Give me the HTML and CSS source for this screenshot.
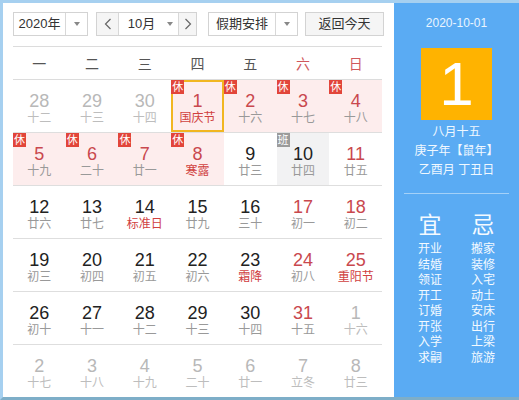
FILE: index.html
```html
<!DOCTYPE html>
<html lang="zh-CN">
<head>
<meta charset="utf-8">
<title>万年历</title>
<link rel="stylesheet" href="styles.css">
</head>
<body>
<div class="frame">
  <div class="left">
    <div class="controls">
      <div class="select year">
        <span class="sel-text">2020年</span>
        <span class="sel-arrow"><i class="tri"></i></span>
      </div>
      <div class="month-group">
        <span class="nav"><svg width="8" height="12" viewBox="0 0 8 12"><polyline points="6.5,1 1.5,6 6.5,11" fill="none" stroke="#666" stroke-width="1.2"/></svg></span>
        <span class="month"><span>10月</span><i class="tri"></i></span>
        <span class="nav next"><svg width="8" height="12" viewBox="0 0 8 12"><polyline points="1.5,1 6.5,6 1.5,11" fill="none" stroke="#666" stroke-width="1.2"/></svg></span>
      </div>
      <div class="select holiday">
        <span class="sel-text">假期安排</span>
        <span class="sel-arrow"><i class="tri"></i></span>
      </div>
      <div class="today-btn">返回今天</div>
    </div>

    <div class="weekdays">
      <span>一</span><span>二</span><span>三</span><span>四</span><span>五</span><span class="we">六</span><span class="we">日</span>
    </div>

    <div class="grid">
      <div class="row">
        <div class="cell other"><div class="num">28</div><div class="lun">十二</div></div>
        <div class="cell other"><div class="num">29</div><div class="lun">十三</div></div>
        <div class="cell other"><div class="num">30</div><div class="lun">十四</div></div>
        <div class="cell hol sel red"><span class="badge">休</span><div class="num">1</div><div class="lun fest">国庆节</div></div>
        <div class="cell hol red"><span class="badge">休</span><div class="num">2</div><div class="lun">十六</div></div>
        <div class="cell hol red"><span class="badge">休</span><div class="num">3</div><div class="lun">十七</div></div>
        <div class="cell hol red"><span class="badge">休</span><div class="num">4</div><div class="lun">十八</div></div>
      </div>
      <div class="row">
        <div class="cell hol red"><span class="badge">休</span><div class="num">5</div><div class="lun">十九</div></div>
        <div class="cell hol red"><span class="badge">休</span><div class="num">6</div><div class="lun">二十</div></div>
        <div class="cell hol red"><span class="badge">休</span><div class="num">7</div><div class="lun">廿一</div></div>
        <div class="cell hol red"><span class="badge">休</span><div class="num">8</div><div class="lun fest">寒露</div></div>
        <div class="cell"><div class="num">9</div><div class="lun">廿三</div></div>
        <div class="cell work"><span class="badge ban">班</span><div class="num">10</div><div class="lun">廿四</div></div>
        <div class="cell red"><div class="num">11</div><div class="lun">廿五</div></div>
      </div>
      <div class="row">
        <div class="cell"><div class="num">12</div><div class="lun">廿六</div></div>
        <div class="cell"><div class="num">13</div><div class="lun">廿七</div></div>
        <div class="cell"><div class="num">14</div><div class="lun fest">标准日</div></div>
        <div class="cell"><div class="num">15</div><div class="lun">廿九</div></div>
        <div class="cell"><div class="num">16</div><div class="lun">三十</div></div>
        <div class="cell red"><div class="num">17</div><div class="lun">初一</div></div>
        <div class="cell red"><div class="num">18</div><div class="lun">初二</div></div>
      </div>
      <div class="row">
        <div class="cell"><div class="num">19</div><div class="lun">初三</div></div>
        <div class="cell"><div class="num">20</div><div class="lun">初四</div></div>
        <div class="cell"><div class="num">21</div><div class="lun">初五</div></div>
        <div class="cell"><div class="num">22</div><div class="lun">初六</div></div>
        <div class="cell"><div class="num">23</div><div class="lun fest">霜降</div></div>
        <div class="cell red"><div class="num">24</div><div class="lun">初八</div></div>
        <div class="cell red"><div class="num">25</div><div class="lun fest">重阳节</div></div>
      </div>
      <div class="row">
        <div class="cell"><div class="num">26</div><div class="lun">初十</div></div>
        <div class="cell"><div class="num">27</div><div class="lun">十一</div></div>
        <div class="cell"><div class="num">28</div><div class="lun">十二</div></div>
        <div class="cell"><div class="num">29</div><div class="lun">十三</div></div>
        <div class="cell"><div class="num">30</div><div class="lun">十四</div></div>
        <div class="cell red"><div class="num">31</div><div class="lun">十五</div></div>
        <div class="cell other"><div class="num">1</div><div class="lun">十六</div></div>
      </div>
      <div class="row last">
        <div class="cell other"><div class="num">2</div><div class="lun">十七</div></div>
        <div class="cell other"><div class="num">3</div><div class="lun">十八</div></div>
        <div class="cell other"><div class="num">4</div><div class="lun">十九</div></div>
        <div class="cell other"><div class="num">5</div><div class="lun">二十</div></div>
        <div class="cell other"><div class="num">6</div><div class="lun">廿一</div></div>
        <div class="cell other"><div class="num">7</div><div class="lun">立冬</div></div>
        <div class="cell other"><div class="num">8</div><div class="lun">廿三</div></div>
      </div>
    </div>
  </div>

  <div class="right">
    <div class="cur-date">2020-10-01</div>
    <div class="big-day">1</div>
    <div class="lunar-info">
      <div>八月十五</div>
      <div>庚子年【鼠年】</div>
      <div>乙酉月 丁丑日</div>
    </div>
    <div class="divider"></div>
    <div class="yiji">
      <div class="col">
        <div class="head">宜</div>
        <div>开业</div><div>结婚</div><div>领证</div><div>开工</div><div>订婚</div><div>开张</div><div>入学</div><div>求嗣</div>
      </div>
      <div class="col">
        <div class="head">忌</div>
        <div>搬家</div><div>装修</div><div>入宅</div><div>动土</div><div>安床</div><div>出行</div><div>上梁</div><div>旅游</div>
      </div>
    </div>
  </div>
</div>
</body>
</html>
```

FILE: styles.css
```css
* { box-sizing: border-box; }
html, body { margin: 0; padding: 0; }
body {
  font-family: "Liberation Sans", "Noto Sans CJK SC", sans-serif;
  background: #ffffff;
}
.frame {
  width: 519px;
  height: 400px;
  display: flex;
  border-top: 3px solid #a6d0f0;
  border-left: 3px solid #a6d0f0;
  border-bottom: 3px solid #7eaec8;
  overflow: hidden;
}
.left {
  width: 391px;
  background: #ffffff;
  padding: 9px 0 0 10px;
}
.controls {
  display: flex;
  height: 24px;
  font-size: 13px;
  color: #333;
}
.select, .month-group, .today-btn {
  border: 1px solid #d3d3d3;
  height: 24px;
  display: flex;
  align-items: stretch;
  line-height: 22px;
}
.year { width: 75px; }
.holiday { width: 90px; margin-left: 11px; }
.sel-text { flex: 1; text-align: center; }
.sel-arrow {
  width: 22px;
  border-left: 1px solid #d8d8d8;
  display: flex;
  align-items: center;
  justify-content: center;
}
.tri {
  display: inline-block;
  width: 0; height: 0;
  border-left: 3.5px solid transparent;
  border-right: 3.5px solid transparent;
  border-top: 4px solid #888;
}
.month-group { width: 101px; margin-left: 8px; }
.nav {
  width: 22px;
  background: #f5f5f5;
  display: flex;
  align-items: center;
  justify-content: center;
}
.nav.next { width: 18px; border-left: 1px solid #d8d8d8; }
.nav:first-child { border-right: 1px solid #d8d8d8; }
.month {
  flex: 1;
  display: flex;
  align-items: center;
  justify-content: center;
  gap: 12px;
  padding-left: 4px;
}
.today-btn {
  width: 79px;
  margin-left: 7px;
  background: #f5f5f5;
  justify-content: center;
}
.weekdays {
  margin-top: 10px;
  width: 369px;
  display: grid;
  grid-template-columns: repeat(7, 1fr);
  border-top: 1px solid #dcdcdc;
  border-bottom: 1px solid #dcdcdc;
  height: 34px;
  align-items: center;
  font-size: 14px;
  color: #555;
  text-align: center;
}
.weekdays .we { color: #d0585c; }
.grid { width: 369px; }
.row {
  display: grid;
  grid-template-columns: repeat(7, 1fr);
  height: 53px;
  border-bottom: 1px solid #dedede;
}
.row.last { border-bottom: none; }
.cell {
  position: relative;
  display: flex;
  flex-direction: column;
  align-items: center;
  padding-top: 11px;
  color: #222;
}
.num {
  font-size: 18px;
  line-height: 20px;
}
.lun {
  font-size: 12px;
  line-height: 14px;
  color: #999;
}
.lun.fest { color: #d0413f; }
.cell.red .num { color: #c9484e; }
.cell.other .num { color: #b8b8b8; }
.cell.other .lun { color: #bdbdbd; }
.cell.hol { background: #fdeded; }
.cell.work { background: #f2f2f3; }
.cell.sel { border: 2px solid #f1b621; padding-top: 9px; }
.badge {
  position: absolute;
  left: 0; top: 0;
  width: 13px; height: 14px;
  background: #e2453a;
  color: #fff;
  font-size: 11px;
  line-height: 14px;
  text-align: center;
}
.cell.sel .badge { left: -2px; top: -2px; }
.badge.ban { background: #9b9b9b; }
.right {
  flex: 1;
  background: #5aabf3;
  color: #f4faff;
  display: flex;
  flex-direction: column;
  align-items: center;
}
.cur-date {
  margin-top: 12px;
  font-size: 12px;
  line-height: 16px;
  color: #eaf5ff;
}
.big-day {
  margin-top: 17px;
  width: 71px;
  height: 72px;
  background: #ffb300;
  color: #fff;
  font-size: 62px;
  line-height: 72px;
  text-align: center;
}
.lunar-info {
  margin-top: 3px;
  font-size: 12px;
  line-height: 19px;
  text-align: center;
  color: #f0f8ff;
}
.divider {
  margin-top: 13px;
  width: 105px;
  height: 1px;
  background: rgba(255,255,255,0.45);
}
.yiji {
  margin-top: 18px;
  display: flex;
}
.col {
  width: 53px;
  display: flex;
  flex-direction: column;
  align-items: center;
  font-size: 12px;
  line-height: 15.5px;
}
.col .head {
  font-size: 23px;
  line-height: 27px;
  margin-bottom: 3px;
}
```
